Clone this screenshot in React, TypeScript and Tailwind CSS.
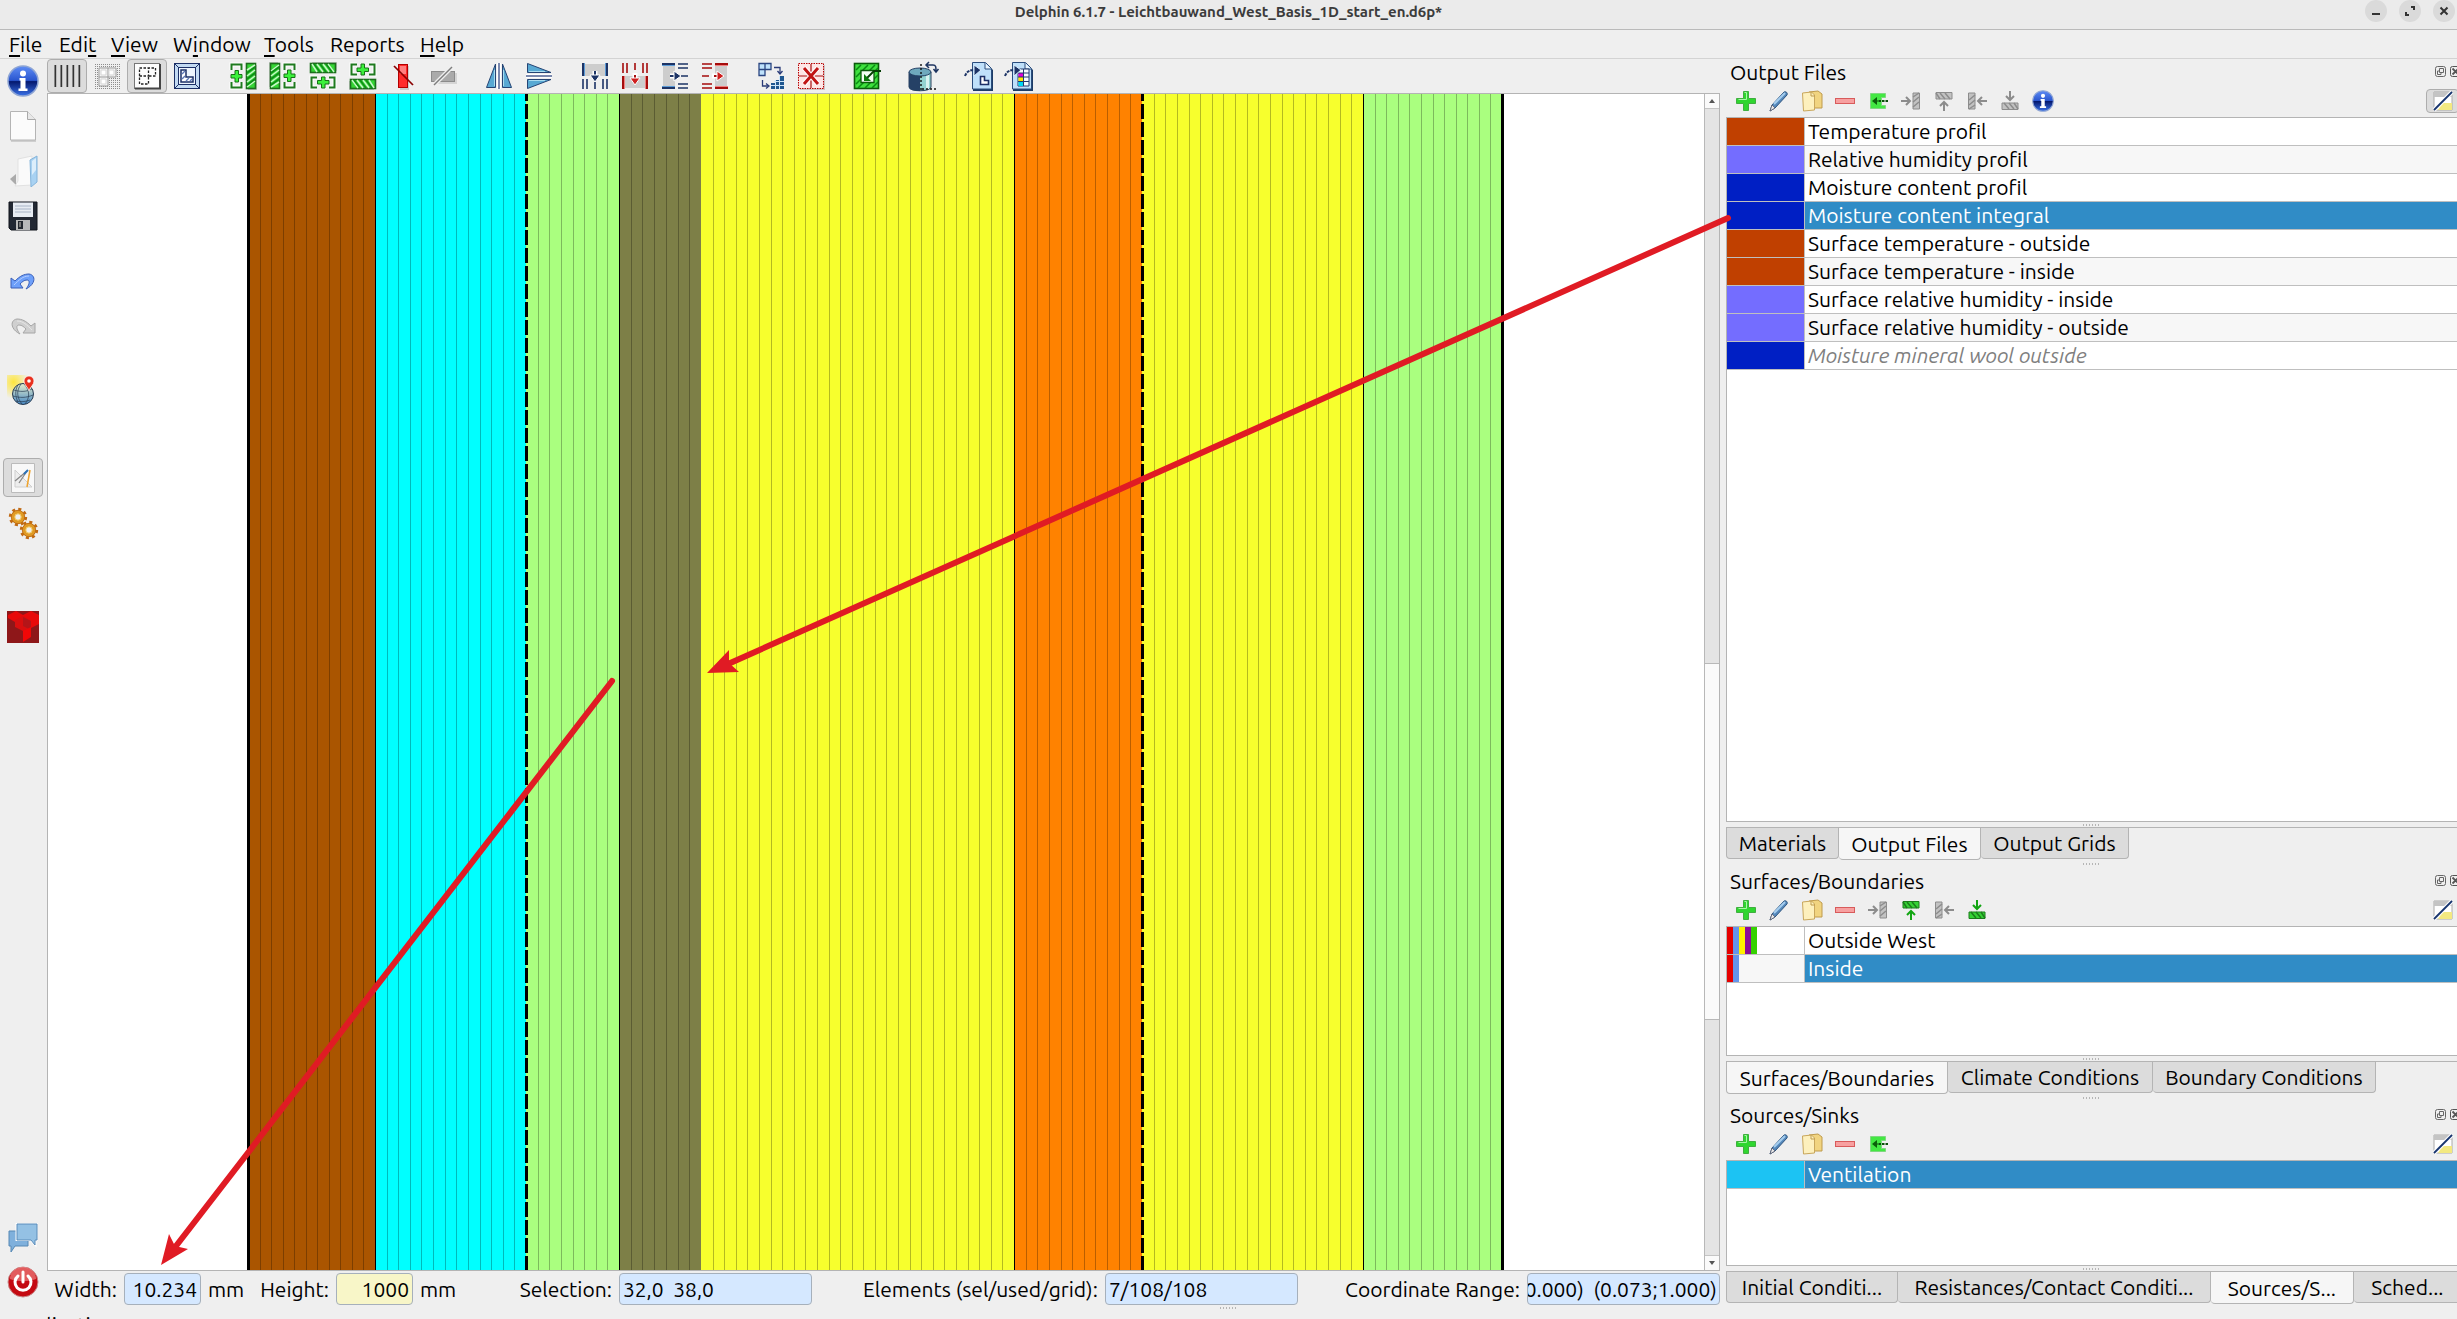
import React, { useState } from "react";

type P = { children?: React.ReactNode };

/* ---------- icon helpers ---------- */

function Ico({ children }: P) {
  return (
    <svg viewBox="0 0 28 28" className="h-7 w-7" fill="none" aria-hidden="true">
      {children}
    </svg>
  );
}

const GridLinesIcon = () => (
  <Ico>
    {[1, 7, 13, 19, 25].map((x) => (
      <g key={x}>
        <path d={`M${x + 0.5} 3v22`} stroke="#9a9a9a" />
        <path d={`M${x + 1.5} 3v22`} stroke="#333" strokeWidth="1.4" />
      </g>
    ))}
  </Ico>
);

const DotBoxesIcon = () => (
  <Ico>
    {Array.from({ length: 13 }, (_, i) => (
      <path key={i} d={`M2 ${2.5 + i * 2}H27`} stroke="#8d8d8d" strokeDasharray="1 1" />
    ))}
    <path d="M6 6h17v9h-8v9H6z" fill="#f4f4f4" stroke="#999" />
    <path d="M6 15h9V6" stroke="#999" />
    <path d="M8 8h5v5H8zM16 8h5v5h-5zM8 17h5v5H8z" fill="#fff" stroke="#d5d5d5" />
  </Ico>
);

const DashBoxesIcon = () => (
  <Ico>
    <rect x="1.5" y="1.5" width="25" height="25" fill="#fdfdfd" stroke="#777" />
    <path d="M2 26.5h25V2" stroke="#444" strokeWidth="2" />
    <path d="M6.500 6h16v8h-7v8h-9z M6.500 14h9V6" stroke="#222" strokeWidth="1.3" strokeDasharray="2.500 1.500" />
  </Ico>
);

const FrameIcon = () => (
  <Ico>
    <rect x="1.500" y="1.500" width="25" height="25" fill="#c3daf2" stroke="#1b2f66" />
    <rect x="5.500" y="5.500" width="17" height="17" fill="#eef5fd" stroke="#1b2f66" />
    <path d="M1.500 1.500l4 4M26.500 1.500l-4 4M1.500 26.500l4-4M26.500 26.500l-4-4" stroke="#1b2f66" />
    <path d="M8 8h5v7h7v5H8z" fill="#fff" stroke="#1b2f66" strokeWidth="1.500" />
    <path d="M9 12l3-3M9 17l3-3M13 19l3-3M17 19l2-2" stroke="#5c78b8" strokeWidth="1.400" />
  </Ico>
);

function InsertIcon({ turn }: { turn: number }) {
  return (
    <Ico>
      <g transform={`rotate(${turn} 14 14)`}>
        <path d="M19 3h9v25h-9z" fill="#c4c4c4" />
        <rect x="17.500" y="1.500" width="9" height="25" fill="#35d535" stroke="#1c6e1c" strokeWidth="1.600" />
        <path d="M18 8l8-5M18 14l8-6M18 20l8-6M18 25l8-6" stroke="#c8f5c8" strokeWidth="1.500" />
        <path d="M18 11l8-6M18 17l8-6M18 23l8-6" stroke="#0e8f17" strokeWidth="1.600" />
        <path d="M2.500 8V2.500H12.500V8M2.500 20v5.500h10V20" stroke="#fff" strokeWidth="4" />
        <path d="M2.500 8V2.500H12.500V8M2.500 20v5.500h10V20" stroke="#1f7a1f" strokeWidth="2" />
        <path d="M6 8.500h3.500v4H13V16H9.500v4H6v-4H2v-3.500h4z" fill="#3cf03c" stroke="#167316" />
      </g>
    </Ico>
  );
}

const DeleteBarIcon = () => (
  <Ico>
    <path d="M11 4h9v24h-9z" fill="#ccc" />
    <rect x="9.500" y="2.500" width="9" height="23" fill="#ff2b2b" stroke="#b30000" />
    <path d="M11 4h6v8h-6z" fill="#ff7f7f" />
    <path d="M5 4l19 19" stroke="#8a0000" strokeWidth="1.700" />
  </Ico>
);

const DeleteRowIcon = () => (
  <Ico>
    <path d="M5 11h23v11H5z" fill="#d5d5d5" />
    <rect x="2.500" y="9.500" width="23" height="10" fill="#aaa" stroke="#8b8b8b" />
    <path d="M5 23L23 5" stroke="#efefef" strokeWidth="4" />
    <path d="M5 23L23 5" stroke="#7e7e7e" strokeWidth="1.500" />
  </Ico>
);

function MirrorIcon({ turn }: { turn: number }) {
  return (
    <Ico>
      <g transform={`rotate(${turn} 14 14)`}>
        <path d="M14 1v26" stroke="#fff" strokeWidth="4" />
        <path d="M14 1v26" stroke="#223a78" strokeWidth="1.200" />
        <path d="M10.500 2v23.500h-9z" fill="#58a9d3" stroke="#254474" />
        <path d="M17.500 2v23.500h9z" fill="#58a9d3" stroke="#254474" />
        <path d="M9.500 8v16M18.500 8v16" stroke="#a9dcef" />
      </g>
    </Ico>
  );
}

function MergeIcon({ turn, red, flip }: { turn: number; red?: boolean; flip?: boolean }) {
  const dark = red ? "#a50d0d" : "#1d3466";
  const light = red ? "#f08080" : "#5c9bd6";
  return (
    <Ico>
      <g transform={`rotate(${turn} 14 14)${flip ? " translate(0 28) scale(1 -1)" : ""}`}>
        <path d="M2 2h24v12H2z" fill="#cdcdcd" />
        <path d="M2 1v13M26 1v13" stroke={dark} strokeWidth="2" />
        <path d="M3.500 1v13M24.500 1v13" stroke={light} />
        <path d="M2 17v10M6 17v10M22 17v10M26 17v10M14 20v7" stroke={dark} strokeWidth="1.600" />
      </g>
      <g transform={`rotate(${turn} 14 14)`}>
        <path d={red ? "M14 11v5" : "M14 9v5"} stroke="#fff" strokeWidth="5" />
        <path d={red ? "M14 13v5" : "M14 9v6"} stroke={dark} strokeWidth="2" />
        <path d={red ? "M9 16h10l-5 7z" : "M9 13h10l-5 7z"} fill={red ? "#cf1f1f" : "#1d3466"} stroke="#fff" />
      </g>
    </Ico>
  );
}

const AssignIcon = () => (
  <Ico>
    <path d="M2 1.500h12v6H8v6H2zM8 1.500v6H2" fill="#bfe2fb" stroke="#2a4580" strokeWidth="1.300" />
    <path d="M17 5.500h6v5M20.500 9l2.500 3 2.500-3M5.500 18v6h5M9 21.500l3 2.500-3 2.500" stroke="#2a3b78" strokeWidth="1.300" />
    <path d="M22 14h5v13H14v-6h4v-3h4z" fill="#1f5790" />
    <path d="M14 23.500h13M17 19.500h10M18.500 18v9M22.500 14v13" stroke="#cfe6f8" />
  </Ico>
);

const RemoveAllIcon = () => (
  <Ico>
    <path d="M3 3h25v25H3z" fill="#cfc6c6" />
    <rect x="1.500" y="1.500" width="25" height="25" fill="#fde6e6" stroke="#b80000" strokeDasharray="1.500 1" />
    <path d="M14 2v24M2 14h24" stroke="#a11" strokeWidth="1.200" />
    <path d="M7 6l14 16M21 6L7 22" stroke="#fff" strokeWidth="5" />
    <path d="M7 6l14 16M21 6L7 22" stroke="#c01414" strokeWidth="3" />
  </Ico>
);

const ImportGreenIcon = () => (
  <Ico>
    <rect x="1.500" y="1.500" width="24" height="25" fill="#3ee03e" stroke="#0b5a0b" strokeWidth="1.600" />
    <path d="M3 8l5-5M3 15L15 3M3 22L22 3M5 26L25 6M12 26l13-13M19 26l6-6" stroke="#0a8a12" strokeWidth="1.500" />
    <path d="M8 8.500h13v12H8z" fill="#f3fff3" stroke="#0b5a0b" strokeWidth="1.300" />
    <path d="M28 9h-7l-7 7" stroke="#063f06" strokeWidth="1.800" />
    <path d="M11 12v7h7z" fill="#0c7b0c" />
  </Ico>
);

const CylinderIcon = () => (
  <svg viewBox="0 0 34 34" className="h-[34px] w-[34px]" fill="none" aria-hidden="true">
    <path d="M3 13v15c0 5 22 5 22 0V13z" fill="#93d3d0" stroke="#2b4160" />
    <path d="M3 13v15c0 3 6 4 11 4V13z" fill="#254166" />
    <path d="M20 13h3v17h-3z" fill="#d8f3f0" />
    <ellipse cx="14" cy="13" rx="11" ry="4" fill="#6fa9bd" stroke="#254166" />
    <path d="M15 5v26M16 30h15" stroke="#111" strokeWidth="1.400" strokeDasharray="2 2" />
    <path d="M21 6h6c3 0 3 2 3 6M23 3l-3 3 3 3M27.500 10l2.500 3 2.500-3" stroke="#1f3560" strokeWidth="1.500" />
  </svg>
);

function SheetIcon({ table }: { table?: boolean }) {
  return (
    <svg viewBox="0 0 32 32" className="h-8 w-8" fill="none" aria-hidden="true">
      <path d="M10 3h13l7 7v21H10z" fill="#1d3c66" />
      <path d="M9.500 2.500h13l6 6V29h-19z" fill="#bfe0fa" stroke="#2a4c7c" />
      <path d="M22 3v6h6" fill="#e9f5ff" stroke="#2a4c7c" />
      {table ? (
        <g>
          <path d="M15 9h11v17H15z" fill="#f5fbff" stroke="#223a6e" />
          <path d="M15.500 13h5v4h-5z" fill="#e200d8" />
          <path d="M15.500 17h5v4.500h-5z" fill="#ffe800" />
          <path d="M15.500 21.500h5v4.500h-5z" fill="#00d8f0" />
          <path d="M15 13h11M15 17h11M15 21.500h11M20.500 9v17" stroke="#223a6e" />
        </g>
      ) : (
        <path d="M17.500 16.500h4v4h4v4h-8z" fill="#fff" stroke="#1c2f66" strokeWidth="1.600" />
      )}
      <path d="M2 16c2-5 5-6 10-6" stroke="#1d3466" strokeWidth="2" strokeDasharray="3 1" />
      <path d="M11 5l7 5-7 6z" fill="#1d3466" stroke="#d9ecfb" />
    </svg>
  );
}

/* ---------- sidebar icons ---------- */

function InfoIcon({ small }: { small?: boolean }) {
  return (
    <svg viewBox="0 0 32 32" className={small ? "h-[22px] w-[22px]" : "h-8 w-8"} aria-hidden="true">
      <defs>
        <linearGradient id="info" x1="0" y1="0" x2="0" y2="1">
          <stop offset="0" stopColor="#5f8df5" />
          <stop offset=".48" stopColor="#2a56cf" />
          <stop offset=".52" stopColor="#04186e" />
          <stop offset="1" stopColor="#3a72e8" />
        </linearGradient>
      </defs>
      <circle cx="16" cy="16" r="15" fill="url(#info)" stroke="#8ea5d4" strokeWidth="1.500" />
      <circle cx="16" cy="8.500" r="3" fill="#fff" />
      <path d="M12.500 13h6v10.500h2V26h-9v-2.500h2v-8h-1z" fill="#fff" />
    </svg>
  );
}

const NewIcon = () => (
  <svg viewBox="0 0 32 32" className="h-8 w-8" aria-hidden="true">
    <path d="M4 31h25" stroke="#cfcfcf" strokeWidth="2" />
    <path d="M3.500 1.500h17l8 8v20.500h-25z" fill="#fbfbfb" stroke="#b4b4b4" />
    <path d="M20.500 1.500v8h8" fill="#e8e8e8" stroke="#a9a9a9" />
  </svg>
);

const OpenIcon = () => (
  <svg viewBox="0 0 32 32" className="h-8 w-8" aria-hidden="true">
    <path d="M3 24l6-5v11z" fill="#aaa" />
    <path d="M11 4l14-3v29l-17 1 3-5z" fill="#fafafa" stroke="#e1e1e1" />
    <path d="M23 5l7-4v26l-6 5z" fill="#a9d2f2" stroke="#84b4da" />
    <path d="M25 6l4-3v12l-4 5z" fill="#dceefb" />
  </svg>
);

const SaveIcon = () => (
  <svg viewBox="0 0 32 32" className="h-8 w-8" aria-hidden="true">
    <path d="M2 2h28v28H4l-2-2z" fill="#222833" stroke="#0f131b" />
    <path d="M6 2.500h20V17H6z" fill="#e7ecf3" />
    <path d="M8 6h16M8 9h16M8 12h16" stroke="#a8b4c6" />
    <path d="M9 20h14v10H9z" fill="#b9b9b9" />
    <path d="M11 21h5v8h-5z" fill="#23272e" />
    <path d="M12 22h2v5h-2z" fill="#777" />
  </svg>
);

function UndoIcon({ redo }: { redo?: boolean }) {
  return (
    <svg viewBox="0 0 26 18" className="h-[18px] w-[26px]" aria-hidden="true">
      <g transform={redo ? "translate(26 0) scale(-1 1)" : undefined}>
        <path
          d="M1 6l4 3c5-5 9-7 14-7 7 1 7 10-3 15 4-5 4-9 1-9-3 0-5 2-7 4l3 4H1z"
          fill={redo ? "#cfcfcf" : "#6ea0fa"}
          stroke={redo ? "#a6a6a6" : "#3a5fb8"}
        />
        <path d="M4 13c5-5 9-9 15-9" fill="none" stroke={redo ? "#e6e6e6" : "#b3cdff"} />
      </g>
    </svg>
  );
}

const GlobeIcon = () => (
  <svg viewBox="0 0 32 32" className="h-8 w-8" aria-hidden="true">
    <defs>
      <radialGradient id="sun" cx=".3" cy=".3" r=".7">
        <stop offset="0" stopColor="#ffe63c" />
        <stop offset="1" stopColor="#ffe63c" stopOpacity="0" />
      </radialGradient>
      <linearGradient id="globe" x1="0" y1="0" x2="0" y2="1">
        <stop offset="0" stopColor="#e6eecb" />
        <stop offset="1" stopColor="#4788c4" />
      </linearGradient>
    </defs>
    <path d="M0 0h22v24H0z" fill="url(#sun)" />
    <circle cx="16" cy="19" r="10.500" fill="url(#globe)" stroke="#273b52" />
    <path d="M7 15c6 2 12 2 18-1M6 21c7 2 13 2 20-1M9 26c5 1 9 1 14-1M14 9c-5 7-4 14 1 20M17 9c6 6 6 14 1 20M11 10c-3 5-3 11 0 17" fill="none" stroke="#273b52" strokeWidth=".700" />
    <path d="M22 16c-1-4-5-6-5-10a5 5 0 0 1 10 0c0 4-4 6-5 10z" fill="#e8301e" stroke="#fff" strokeWidth=".700" />
    <circle cx="22" cy="6" r="1.800" fill="#fff" />
  </svg>
);

const DesignIcon = () => (
  <svg viewBox="0 0 24 30" className="h-[30px] w-6" aria-hidden="true">
    <path d="M.5.5h23v29H.5z" fill="#f8f8f8" stroke="#bbb" />
    <path d="M4 7v17h17z" fill="#ededed" stroke="#cfcfcf" />
    <path d="M4 18L16 8M8 20l8-12" stroke="#888" strokeWidth="1.300" />
    <path d="M13 11l4-4" stroke="#2e73b8" strokeWidth="2" />
    <path d="M19 7l-3 17" stroke="#efa32c" strokeWidth="1.500" />
  </svg>
);

function Gear({ x, y }: { x: number; y: number }) {
  return (
    <g transform={`translate(${x} ${y})`}>
      <circle r="7.700" fill="none" stroke="#c06a14" strokeWidth="3" strokeDasharray="3 3.050" />
      <circle r="4.900" fill="none" stroke="#e09a24" strokeWidth="4" />
      <circle r="6.700" fill="none" stroke="#b8620f" strokeWidth=".800" />
      <circle r="3.200" fill="#efefef" stroke="#f3c960" />
    </g>
  );
}

const GearsIcon = () => (
  <svg viewBox="0 0 32 34" className="h-[34px] w-8" aria-hidden="true">
    <Gear x={11} y={11} />
    <Gear x={22} y={24} />
  </svg>
);

const RedCubesIcon = () => (
  <svg viewBox="0 0 32 32" className="h-8 w-8" aria-hidden="true">
    <path d="M0 0h32v32H0z" fill="#8e1719" />
    <path d="M1 4l8-4 7 4v10l-8-3-7-4zM16 4l8-4 8 4v9l-8 4-8-3z" fill="#e80a0a" />
    <path d="M8 9l8-4 8 5v12l-8 6V20l-8-4z" fill="#d90f0f" />
    <path d="M16 6l8 4v9l-8-4z" fill="#b41518" />
    <path d="M16 20l8-4v10l-8 5z" fill="#f00707" />
  </svg>
);

const ChatIcon = () => (
  <svg viewBox="0 0 32 32" className="h-8 w-8" aria-hidden="true">
    <path d="M2 10h19v15H8l-4 6v-6H2z" fill="#7fb0dc" stroke="#5688b4" />
    <path d="M9.500 3h20v16h-1v5l-5-5h-14z" fill="#a3cbe8" stroke="#fff" strokeWidth="2" />
    <path d="M10 3h20v16h-2v5l-4-5H10z" fill="#94c1e4" stroke="#5b8cba" />
  </svg>
);

const PowerIcon = () => (
  <svg viewBox="0 0 32 32" className="h-8 w-8" aria-hidden="true">
    <circle cx="16" cy="16" r="15" fill="#c40a12" stroke="#c98a8a" />
    <path d="M3 13a13 12 0 0 1 26 0c-8 3-18 3-26 0z" fill="#ef7d7d" opacity=".7" />
    <path d="M11 10a8 8 0 1 0 10 0" fill="none" stroke="#fff" strokeWidth="3" strokeLinecap="round" />
    <path d="M16 6v10" stroke="#fff" strokeWidth="3" strokeLinecap="round" />
  </svg>
);

/* ---------- dock icons ---------- */

function Small({ children }: P) {
  return (
    <svg viewBox="0 0 22 22" className="h-[22px] w-[22px]" fill="none" aria-hidden="true">
      {children}
    </svg>
  );
}

const PlusIcon = () => (
  <Small>
    <path d="M8.500 1.500h5v7h7v5h-7v7h-5v-7h-7v-5h7z" fill="#2fd62f" stroke="#3faf3f" />
    <path d="M9.500 2.500h2v7h-8" stroke="#a8f5a8" />
  </Small>
);
const PencilIcon = () => (
  <Small>
    <path d="M2 21l2-6L16 2c2-1 4 1 3 3L7 18z" fill="#5588bb" stroke="#2e557f" />
    <path d="M6 14L17 3" stroke="#a5cdee" strokeWidth="2" />
    <path d="M2 21l2-6 3 3z" fill="#e8e8e8" stroke="#556" strokeWidth=".700" />
  </Small>
);
const CopyIcon = () => (
  <Small>
    <path d="M8 2l9-1 4 3v14H9z" fill="#f1d480" stroke="#bf9b4c" />
    <path d="M1.500 3l9-1 3 3v15l-11 1z" fill="#fdf0bd" stroke="#c9a75c" />
    <path d="M10 2v4h4" stroke="#bf9b4c" />
  </Small>
);
const MinusIcon = () => (
  <Small>
    <rect x="1.500" y="8.500" width="19" height="5" fill="#f7a0a0" stroke="#d85b5b" />
  </Small>
);
const AssignGreenIcon = () => (
  <Small>
    <path d="M3.500 3.500h15v4h-4v8h4v3h-15z" fill="#43e843" stroke="#7fd87f" />
    <path d="M15 8h4v7h-4z" fill="#efefef" />
    <path d="M21 11H9" stroke="#0b4f0b" strokeWidth="1.800" strokeDasharray="2.500 1" />
    <path d="M10 7v8l-5-4z" fill="#0b5f0b" />
  </Small>
);
function SideIcon({ turn, green }: { turn: number; green?: boolean }) {
  const c = green ? "#1c7d1c" : "#8c8c8c";
  return (
    <Small>
      <g transform={`rotate(${turn} 11 11)`}>
        <path d="M13 3h6.500v16H13z" fill={green ? "#35d235" : "#c2c2c2"} stroke={c} />
        <path d="M13 7l6-4M13 12l6-5M13 17l6-5" stroke={c} strokeWidth="1.500" />
        <path d="M1 11h8M6 7l4 4-4 4" stroke={green ? "#12a512" : c} strokeWidth="2" />
      </g>
    </Small>
  );
}
const FilterIcon = () => (
  <Small>
    <path d="M2 2h18v18H2z" fill="#fff" stroke="#aaa" />
    <path d="M2 2h18v5H2z" fill="#c4c4c4" />
    <path d="M10 13h10v7H6z" fill="#f3e981" />
    <path d="M2 20L20 2" stroke="#fff" strokeWidth="4" />
    <path d="M2 20L20 2" stroke="#17356f" strokeWidth="1.800" />
  </Small>
);

/* ---------- generic controls ---------- */

function Dots() {
  return (
    <div className="flex gap-px" aria-hidden="true">
      {[0, 1, 2, 3, 4, 5].map((i) => (
        <i key={i} className="mr-px h-0.5 w-px bg-[#b5b5b5]" />
      ))}
    </div>
  );
}

function ToolButton({ label, pressed, children }: P & { label: string; pressed?: boolean }) {
  return (
    <button
      aria-label={label}
      className={
        "flex h-[34px] w-10 items-center justify-center rounded-sm border " +
        (pressed ? "border-[#adadad] bg-[#dcdcdc]" : "border-transparent")
      }
    >
      {children}
    </button>
  );
}

function SideButton({ label, pressed, children }: P & { label: string; pressed?: boolean }) {
  return (
    <div className="flex h-[45px] items-start justify-center pt-0.5">
      <button
        aria-label={label}
        className={
          "flex h-[39px] w-10 items-center justify-center rounded-sm border " +
          (pressed ? "border-[#adadad] bg-[#dcdcdc]" : "border-transparent")
        }
      >
        {children}
      </button>
    </div>
  );
}

type Row = { name: string; colors: string[]; wide?: boolean; italic?: boolean };

function ItemTable({ label, rows, initial }: { label: string; rows: Row[]; initial: number }) {
  const [sel, setSel] = useState(initial);
  return (
    <table aria-label={label} className="w-full table-fixed border-separate border-spacing-0">
      <colgroup>
        <col className="w-[78px]" />
        <col />
      </colgroup>
      <tbody>
        {rows.map((r, i) => (
          <tr key={r.name} onClick={() => setSel(i)} className={i % 2 ? "bg-[#f7f7f7]" : "bg-white"}>
            <td className="border-r border-b border-[#bfbfbf] p-0">
              <div className="flex h-[27px]">
                {r.colors.map((c) => (
                  <span key={c} className={r.wide ? "w-1.5" : "flex-1"} style={{ background: c }} />
                ))}
              </div>
            </td>
            <td
              className={
                "h-7 truncate border-b border-[#bfbfbf] py-0 pl-[3px] leading-[27px] " +
                (i === sel ? "bg-[#308cc6] text-white " : "") +
                (r.italic ? "text-[#808080] italic" : "")
              }
            >
              {r.name}
            </td>
          </tr>
        ))}
      </tbody>
    </table>
  );
}

function DockHeader({ title }: { title: string }) {
  return (
    <div className="flex h-7 items-start justify-between pl-1">
      <h2 className="leading-[26px]">{title}</h2>
      <div className="-mr-1 flex gap-1 pt-[7px]">
        <button aria-label={"Float " + title} className="h-[11px] w-[11px]">
          <svg viewBox="0 0 11 11" className="h-[11px] w-[11px]" fill="none" stroke="#666">
            <rect x=".5" y=".5" width="10" height="10" rx="2" />
            <path d="M4.500 2.500h4v4h-4zM6 6.500v2H2.500V5h2" />
          </svg>
        </button>
        <button aria-label={"Close " + title} className="h-[11px] w-[11px]">
          <svg viewBox="0 0 11 11" className="h-[11px] w-[11px]" fill="none" stroke="#555">
            <rect x=".5" y=".5" width="10" height="10" rx="2" />
            <path d="M2.500 2.500l6 6M8.500 2.500l-6 6" strokeWidth="1.800" />
          </svg>
        </button>
      </div>
    </div>
  );
}

function DockTools({ icons, pressed }: { icons: [string, React.ReactNode][]; pressed?: boolean }) {
  return (
    <div className="flex h-[30px] items-start justify-between pl-1">
      <div className="flex">
        {icons.map(([l, node]) => (
          <button key={l} aria-label={l} className="flex h-7 w-[33px] items-center justify-center">
            {node}
          </button>
        ))}
      </div>
      <button
        aria-label="Toggle filter"
        className={
          "mt-0.5 -mr-0.5 flex h-6 w-[33px] items-center justify-center rounded-sm border " +
          (pressed ? "border-[#adadad] bg-[#dcdcdc]" : "border-transparent")
        }
      >
        <FilterIcon />
      </button>
    </div>
  );
}

function Tabs({ tabs, initial }: { tabs: [string, string][]; initial: number }) {
  const [cur, setCur] = useState(initial);
  return (
    <div>
      <div className="flex h-[5px] items-center justify-center">
        <Dots />
      </div>
      <div role="tablist" className="flex h-[34px] items-start overflow-hidden border-t border-[#b4b4b4]">
        {tabs.map(([t, w], i) => (
          <button
            key={t}
            role="tab"
            aria-selected={i === cur}
            onClick={() => setCur(i)}
            className={
              "shrink-0 rounded-b-sm border-r border-b border-[#b4b4b4] whitespace-nowrap " +
              w +
              (i === 0 ? " border-l" : "") +
              (i === cur ? " -mt-px h-[33px] bg-[#f6f6f6] pt-0.5" : " h-[31px] bg-[#dcdcdc]")
            }
          >
            {t}
          </button>
        ))}
      </div>
    </div>
  );
}

/* ---------- construction drawing ---------- */

const LAYERS: { x: number; w: number; n: number; fill: string }[] = [
  { x: 200, w: 127, n: 11, fill: "#aa5500" },
  { x: 327, w: 151, n: 13, fill: "#00ffff" },
  { x: 478, w: 93, n: 8, fill: "#aaff7f" },
  { x: 571, w: 82, n: 7, fill: "#7d7f47" },
  { x: 653, w: 313, n: 27, fill: "#f7ff2d" },
  { x: 966, w: 128, n: 11, fill: "#ff8200" },
  { x: 1094, w: 221, n: 19, fill: "#f7ff2d" },
  { x: 1315, w: 139, n: 12, fill: "#aaff7f" },
];

function Construction() {
  return (
    <svg className="min-w-0 flex-1 bg-white" role="img" aria-label="Wall construction">
      {LAYERS.map((l) => (
        <g key={l.x} shapeRendering="crispEdges">
          <rect x={l.x} y="0" width={l.w} height="100%" fill={l.fill} />
          {Array.from({ length: l.n - 1 }, (_, i) => (
            <rect
              key={i}
              x={l.x + Math.round((l.w * (i + 1)) / l.n)}
              y="0"
              width="1"
              height="100%"
              fill="#000"
              fillOpacity=".27"
            />
          ))}
        </g>
      ))}
      <g fill="#000" shapeRendering="crispEdges">
        <rect x="199" y="0" width="3" height="100%" />
        <rect x="327" y="0" width="1" height="100%" />
        <rect x="571" y="0" width="1" height="100%" />
        <rect x="966" y="0" width="1" height="100%" />
        <rect x="1315" y="0" width="1" height="100%" />
        <rect x="1453" y="0" width="3" height="100%" />
      </g>
      <g stroke="#000" strokeWidth="3" strokeDasharray="15 3" strokeDashoffset="8" shapeRendering="crispEdges">
        <line x1="478.500" x2="478.500" y1="0" y2="100%" />
        <line x1="1094.500" x2="1094.500" y1="0" y2="100%" />
      </g>
    </svg>
  );
}

function ScrollBar() {
  return (
    <div className="flex w-[15px] flex-col border-l border-[#b8b8b8] bg-[#e4e4e4]">
      <button aria-label="Scroll up" className="flex h-[15px] items-center justify-center border-b border-[#c4c4c4] bg-[#fafafa]">
        <svg viewBox="0 0 6 4" className="h-1 w-1.5" fill="#555"><path d="M0 4l3-4 3 4z" /></svg>
      </button>
      <div className="flex flex-1 flex-col">
        <div className="flex-[555]" />
        <div className="flex-[356] border-y border-[#b8b8b8] bg-[#fafafa]" />
        <div className="flex-[236]" />
      </div>
      <button aria-label="Scroll down" className="flex h-[15px] items-center justify-center border-t border-[#c4c4c4] bg-[#fafafa]">
        <svg viewBox="0 0 6 4" className="h-1 w-1.5" fill="#555"><path d="M0 0l3 4 3-4z" /></svg>
      </button>
    </div>
  );
}

function Field({
  id, label, labelW, value, box, unit, right,
}: {
  id: string; label: string; labelW: string; value: string; box: string; unit?: string; right?: boolean;
}) {
  return (
    <div className="flex items-center whitespace-nowrap">
      <label htmlFor={id} className={"mr-[7px] flex justify-end " + labelW}>{label}</label>
      {right ? (
        <div className={"flex h-8 items-center justify-end overflow-hidden rounded-sm border border-[#a6b0bb] pr-0.5 " + box}>
          <input id={id} readOnly defaultValue={value} className="w-[300px] shrink-0 bg-transparent text-right whitespace-pre outline-none" />
        </div>
      ) : (
        <input id={id} readOnly defaultValue={value} className={"h-8 rounded-sm border border-[#a6b0bb] px-[3px] outline-none " + box} />
      )}
      {unit && <span className="ml-[7px] w-[35px]">{unit}</span>}
    </div>
  );
}

const MENU: [string, string, string, string][] = [
  ["", "F", "ile", "w-[50px]"],
  ["Edi", "t", "", "w-[52px]"],
  ["", "V", "iew", "w-[62px]"],
  ["W", "i", "ndow", "w-[91px]"],
  ["", "T", "ools", "w-[66px]"],
  ["Reports", "", "", "w-[90px]"],
  ["", "H", "elp", "w-[60px]"],
];

const TEMP = "#c04000";
const RH = "#746dff";
const MC = "#001fc4";

export default function App() {
  const common: [string, React.ReactNode][] = [
    ["Add", <PlusIcon />],
    ["Edit", <PencilIcon />],
    ["Copy", <CopyIcon />],
    ["Remove", <MinusIcon />],
  ];
  return (
    <div className="relative flex h-screen flex-col overflow-hidden bg-[#efefef] font-['Ubuntu','Noto_Sans','Open_Sans',sans-serif] text-[21px] leading-7 text-black">
      <header className="grid h-[30px] grid-cols-[1fr_auto_1fr] border-b border-[#bababa] bg-[#ebebeb]">
        <span />
        <h1 className="text-[15px] leading-[23px] font-bold text-[#3c3c3c]">
          Delphin 6.1.7 - Leichtbauwand_West_Basis_1D_start_en.d6p*
        </h1>
        <div className="flex justify-end gap-3 pr-0.5">
          {[["Minimize", "M7 14h8"], ["Restore", "M12 7h3v3M10 15H7v-3"], ["Close", "M7.500 7.500l7 7M14.500 7.500l-7 7"]].map(([l, d]) => (
            <button key={l} aria-label={l} className="h-[22px] w-[22px] rounded-full bg-[#dadada]">
              <svg viewBox="0 0 22 22" className="h-[22px] w-[22px]" fill="none" stroke="#333" strokeWidth="2">
                <path d={d} />
              </svg>
            </button>
          ))}
        </div>
      </header>

      <nav className="flex h-[29px] border-b border-[#d3d3d3] pl-[9px]">
        {MENU.map(([a, b, c, w]) => (
          <button key={a + b + c} className={"text-left whitespace-nowrap " + w}>
            {a}
            <span className="underline decoration-2 underline-offset-3">{b}</span>
            {c}
          </button>
        ))}
      </nav>

      <div className="flex min-h-0 flex-1">
        <aside className="flex w-[47px] shrink-0 flex-col pr-0.5">
          <SideButton label="About"><InfoIcon /></SideButton>
          <SideButton label="New"><NewIcon /></SideButton>
          <SideButton label="Open"><OpenIcon /></SideButton>
          <SideButton label="Save"><SaveIcon /></SideButton>
          <div className="h-5" />
          <SideButton label="Undo"><UndoIcon /></SideButton>
          <SideButton label="Redo"><UndoIcon redo /></SideButton>
          <div className="h-5" />
          <SideButton label="Location"><GlobeIcon /></SideButton>
          <div className="h-[42px]" />
          <SideButton label="Construction view" pressed><DesignIcon /></SideButton>
          <SideButton label="Simulation"><GearsIcon /></SideButton>
          <div className="h-[59px]" />
          <SideButton label="Post-processing"><RedCubesIcon /></SideButton>
          <div className="flex-1" />
          <SideButton label="Feedback"><ChatIcon /></SideButton>
          <SideButton label="Quit"><PowerIcon /></SideButton>
        </aside>

        <main className="flex min-w-0 flex-1 flex-col">
          <div className="flex h-[34px] items-center">
            <ToolButton label="Show grid" pressed><GridLinesIcon /></ToolButton>
            <ToolButton label="Show materials"><DotBoxesIcon /></ToolButton>
            <ToolButton label="Show outline" pressed><DashBoxesIcon /></ToolButton>
            <ToolButton label="Fit to window"><FrameIcon /></ToolButton>
            <div className="w-4" />
            <ToolButton label="Insert column left"><InsertIcon turn={0} /></ToolButton>
            <ToolButton label="Insert column right"><InsertIcon turn={180} /></ToolButton>
            <ToolButton label="Insert row below"><InsertIcon turn={270} /></ToolButton>
            <ToolButton label="Insert row above"><InsertIcon turn={90} /></ToolButton>
            <ToolButton label="Delete column"><DeleteBarIcon /></ToolButton>
            <ToolButton label="Delete row"><DeleteRowIcon /></ToolButton>
            <div className="w-4" />
            <ToolButton label="Mirror horizontally"><MirrorIcon turn={0} /></ToolButton>
            <ToolButton label="Mirror vertically"><MirrorIcon turn={90} /></ToolButton>
            <div className="w-4" />
            <ToolButton label="Refine columns"><MergeIcon turn={0} /></ToolButton>
            <ToolButton label="Merge columns"><MergeIcon turn={0} red flip /></ToolButton>
            <ToolButton label="Refine rows"><MergeIcon turn={270} /></ToolButton>
            <ToolButton label="Merge rows"><MergeIcon turn={270} red flip /></ToolButton>
            <div className="w-4" />
            <ToolButton label="Discretize"><AssignIcon /></ToolButton>
            <ToolButton label="Remove assignments"><RemoveAllIcon /></ToolButton>
            <div className="w-4" />
            <ToolButton label="Assign"><ImportGreenIcon /></ToolButton>
            <div className="w-4" />
            <ToolButton label="Rotational symmetry"><CylinderIcon /></ToolButton>
            <div className="w-4" />
            <ToolButton label="Export geometry"><SheetIcon /></ToolButton>
            <ToolButton label="Export table"><SheetIcon table /></ToolButton>
          </div>
          <div className="flex min-h-0 flex-1 border border-[#b4b4b4] bg-white">
            <Construction />
            <ScrollBar />
          </div>
          <div className="flex h-[34px] items-end justify-between">
            <div className="flex gap-[17px] pl-2">
              <Field id="w" label="Width:" labelW="w-[62px]" value="10.234" box="w-[77px] bg-[#d5e8ff] text-right" unit="mm" />
              <Field id="h" label="Height:" labelW="w-[69px]" value="1000" box="w-[77px] bg-[#f8f6c8] text-right" unit="mm" />
            </div>
            <div className="flex gap-[46px]">
              <Field id="sel" label="Selection:" labelW="w-[93px]" value="32,0  38,0" box="w-[193px] bg-[#d5e8ff]" />
              <Field id="el" label="Elements (sel/used/grid):" labelW="w-[240px]" value="7/108/108" box="w-[193px] bg-[#d5e8ff]" />
              <Field id="co" label="Coordinate Range:" labelW="w-[176px]" value="(0.063;0.000)  (0.073;1.000)" box="w-[193px] bg-[#d5e8ff]" right />
            </div>
          </div>
        </main>

        <section className="flex w-[30%] shrink-0 flex-col pl-[6px]">
          <DockHeader title="Output Files" />
          <DockTools
            pressed
            icons={[
              ...common,
              ["Assign", <AssignGreenIcon />],
              ["Assign left", <SideIcon turn={0} />],
              ["Assign top", <SideIcon turn={270} />],
              ["Assign right", <SideIcon turn={180} />],
              ["Assign bottom", <SideIcon turn={90} />],
              ["Info", <InfoIcon small />],
            ]}
          />
          <div className="min-h-0 flex-1 border-y border-l border-[#b4b4b4] bg-white">
            <ItemTable
              label="Output Files"
              initial={3}
              rows={[
                { name: "Temperature profil", colors: [TEMP] },
                { name: "Relative humidity profil", colors: [RH] },
                { name: "Moisture content profil", colors: [MC] },
                { name: "Moisture content integral", colors: [MC] },
                { name: "Surface temperature - outside", colors: [TEMP] },
                { name: "Surface temperature - inside", colors: [TEMP] },
                { name: "Surface relative humidity - inside", colors: [RH] },
                { name: "Surface relative humidity - outside", colors: [RH] },
                { name: "Moisture mineral wool outside", colors: [MC], italic: true },
              ]}
            />
          </div>
          <Tabs initial={1} tabs={[["Materials", "w-[113px]"], ["Output Files", "w-[142px]"], ["Output Grids", "w-[148px]"]]} />
          <div className="flex h-[7px] items-start justify-center pt-0.5"><Dots /></div>

          <DockHeader title="Surfaces/Boundaries" />
          <DockTools
            icons={[
              ...common,
              ["Assign left", <SideIcon turn={0} />],
              ["Assign top", <SideIcon turn={270} green />],
              ["Assign right", <SideIcon turn={180} />],
              ["Assign bottom", <SideIcon turn={90} green />],
            ]}
          />
          <div className="h-[130px] border-y border-l border-[#b4b4b4] bg-white">
            <ItemTable
              label="Surfaces/Boundaries"
              initial={1}
              rows={[
                { name: "Outside West", wide: true, colors: ["#e60000", "#6495ed", "#fff000", "#8b0a9b", "#35d100"] },
                { name: "Inside", wide: true, colors: ["#e60000", "#6495ed"] },
              ]}
            />
          </div>
          <Tabs
            initial={0}
            tabs={[["Surfaces/Boundaries", "w-[222px]"], ["Climate Conditions", "w-[205px]"], ["Boundary Conditions", "w-[223px]"]]}
          />
          <div className="flex h-[7px] items-start justify-center pt-0.5"><Dots /></div>

          <DockHeader title="Sources/Sinks" />
          <DockTools icons={[...common, ["Assign", <AssignGreenIcon />]]} />
          <div className="h-[106px] border-y border-l border-[#b4b4b4] bg-white">
            <ItemTable label="Sources/Sinks" initial={0} rows={[{ name: "Ventilation", colors: ["#1cc3f3"] }]} />
          </div>
          <Tabs
            initial={2}
            tabs={[
              ["Initial Conditi...", "w-[172px]"],
              ["Resistances/Contact Conditi...", "w-[313px]"],
              ["Sources/S...", "w-[143px]"],
              ["Sched...", "w-[108px]"],
            ]}
          />
        </section>
      </div>

      <footer className="h-3.5 shrink-0 overflow-hidden">
        <div className="flex h-1.5 items-center justify-center"><Dots /></div>
        <p className="pl-2">Application</p>
      </footer>

      {/* annotation arrows lying over the window */}
      <svg className="pointer-events-none absolute inset-0 h-full w-full" aria-hidden="true">
        <g stroke="#e01b24" strokeWidth="6" strokeLinecap="round">
          <line x1="1728" y1="218" x2="728" y2="664" />
          <line x1="612" y1="681" x2="176" y2="1246" />
        </g>
        <path d="M707 673l22-23v13l10 9z" fill="#e01b24" />
        <path d="M161 1265l8-31 6 12 13 3z" fill="#e01b24" />
      </svg>
    </div>
  );
}
